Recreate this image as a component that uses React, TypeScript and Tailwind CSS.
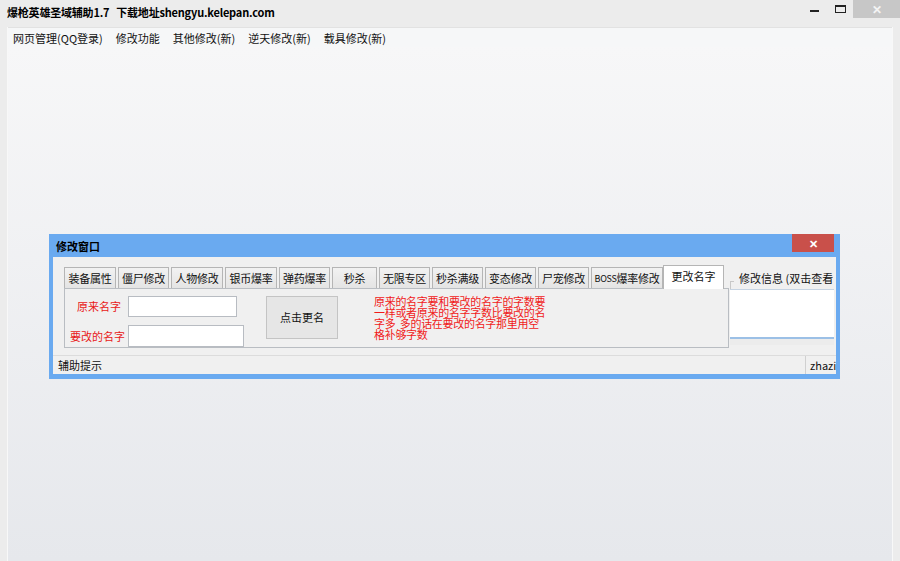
const tabs = [
  { name: '装备属性', w: 'w-[52px]' },
  { name: '僵尸修改', w: 'w-[51px]' },
  { name: '人物修改', w: 'w-[52px]' },
  { name: '银币爆率', w: 'w-[52px]' },
  { name: '弹药爆率', w: 'w-[51px]' },
  { name: '秒杀', w: 'w-[45px]' },
  { name: '无限专区', w: 'w-[51px]' },
  { name: '秒杀满级', w: 'w-[51px]' },
  { name: '变态修改', w: 'w-[51px]' },
  { name: '尸宠修改', w: 'w-[51px]' },
]

const menus = ['网页管理(QQ登录)', '修改功能', '其他修改(新)', '逆天修改(新)', '载具修改(新)']

const font = { fontFamily: '"Noto Sans CJK SC", "Liberation Sans", sans-serif' }

export default function App() {
  return (
    <div
      className="w-[900px] h-[561px] bg-[#ececec] flex flex-col text-[11px] text-[#111] overflow-hidden"
      style={font}
    >
      {/* Title bar */}
      <div className="h-[27px] flex items-start shrink-0">
        <div className="pl-[7px] pt-[5px] font-bold text-[11px] leading-[15px] tracking-[-0.2px] text-black">
          爆枪英雄圣域辅助1.7&nbsp;&nbsp;&nbsp;下载地址shengyu.kelepan.com
        </div>
        <div className="ml-auto flex items-start">
          <div className="w-[26px] h-[17px] flex items-center justify-center">
            <div className="w-[9px] h-[2px] bg-[#222] mt-[5px]" />
          </div>
          <div className="w-[26px] h-[17px] flex items-center justify-center">
            <div className="w-[11px] h-[8px] border border-[#222] border-t-2" />
          </div>
          <div className="w-[47px] h-[18px] bg-[#c7c7c7] flex items-center justify-center text-[#f4f4f4] text-[12px] leading-none font-bold">
            ✕
          </div>
        </div>
      </div>

      {/* Window frame */}
      <div className="flex-1 px-[7px] flex flex-col">
        <div className="flex-1 flex flex-col border-l border-r border-[#f8f8f8]">
          {/* Menu bar */}
          <div className="h-[20px] bg-[#f6f7f8] flex items-center pl-[5px] border-t border-[#e2e2e2]">
            {menus.map((m) => (
              <div key={m} className="mr-[13px] leading-[18px] text-[#111] whitespace-nowrap">
                {m}
              </div>
            ))}
          </div>

          {/* Client area */}
          <div className="flex-1 bg-gradient-to-b from-[#f7f7f8] to-[#e6e8ec] pt-[187px] pl-[41px]">
            {/* Dialog */}
            <div className="w-[791px] h-[145px] bg-[#6aaaf0] flex flex-col px-[4px] pb-[5px]">
              <div className="h-[23px] flex items-start shrink-0">
                <div className="pl-[3px] pt-[5px] font-bold text-[11px] leading-[15px] text-black">修改窗口</div>
                <div className="ml-auto mr-[2px] w-[42px] h-[18px] bg-[#c9504a] flex items-center justify-center text-white text-[11px] font-bold leading-none">
                  ✕
                </div>
              </div>

              <div className="flex-1 bg-[#f0f0f0] flex flex-col">
                <div className="flex pl-[11px] pt-[8px]">
                  {/* Tab control */}
                  <div className="w-[665px] flex flex-col">
                    <div className="h-[23px] flex items-end relative z-10">
                      {tabs.map((t) => (
                        <div
                          key={t.name}
                          className={`${t.w} h-[21px] mr-[2px] border border-b-0 border-[#b5b5b5] bg-gradient-to-b from-[#f2f2f2] to-[#e4e4e4] flex items-center justify-center leading-none whitespace-nowrap tracking-[-0.2px]`}
                        >
                          {t.name}
                        </div>
                      ))}
                      <div className="w-[72px] h-[21px] mr-[2px] border border-b-0 border-[#b5b5b5] bg-gradient-to-b from-[#f2f2f2] to-[#e4e4e4] flex items-center justify-center leading-none whitespace-nowrap">
                        <span className="text-[9px] tracking-[-0.3px]">BOSS</span>
                        <span className="tracking-[-0.3px]">爆率修改</span>
                      </div>
                      <div className="w-[61px] h-[24px] -ml-[2px] -mb-[1px] border border-b-0 border-[#b5b5b5] bg-white flex items-center justify-center leading-none pb-[3px]">
                        更改名字
                      </div>
                    </div>
                    <div className="h-[60px] border border-[#b9bdc2] bg-[#f0f0f0] flex items-start pt-[7px]">
                      <div className="flex flex-col gap-[8px]">
                        <div className="flex items-center h-[21px]">
                          <div className="w-[56px] text-right text-[#e81818]">原来名字</div>
                          <div className="ml-[7px] w-[109px] h-[21px] bg-white border border-[#b8bcc2]" />
                        </div>
                        <div className="flex items-center h-[22px]">
                          <div className="w-[60px] text-right text-[#e81818]">要改的名字</div>
                          <div className="ml-[3px] w-[116px] h-[22px] bg-white border border-[#b8bcc2]" />
                        </div>
                      </div>
                      <div className="ml-[22px] w-[72px] h-[43px] bg-[#e6e6e6] border border-[#c4c4c4] flex items-center justify-center">
                        点击更名
                      </div>
                      <div className="ml-[36px] w-[182px] text-[11px] leading-[11px] text-[#f01a1a] tracking-[-0.3px]">
                        原来的名字要和要改的名字的字数要
                        <br />
                        一样或者原来的名字字数比要改的名
                        <br />
                        字多&nbsp;&nbsp;多的话在要改的名字那里用空
                        <br />
                        格补够字数
                      </div>
                    </div>
                  </div>

                  {/* Info list */}
                  <div className="ml-[1px] w-[104px] flex flex-col">
                    <div className="h-[24px] flex items-end relative">
                      <div className="absolute left-0 bottom-0 w-[4px] h-[8px] border-l border-t border-[#c8c8c8]" />
                      <div className="pl-[9px] pb-[4px] whitespace-nowrap overflow-hidden leading-[14px]">
                        修改信息 (双击查看
                      </div>
                    </div>
                    <div className="h-[50px] bg-white border-t border-[#c6d4e3] border-b-2 border-b-[#9cc0e6]" />
                    <div className="h-[6px] bg-[#ececec]" />
                  </div>
                </div>

                {/* Status bar */}
                <div className="mt-auto h-[19px] border-t border-[#dcdcdc] flex items-center">
                  <div className="flex-1 pl-[5px] leading-none">辅助提示</div>
                  <div className="w-[31px] h-full border-l border-[#d0d0d0] pl-[4px] flex items-center overflow-hidden whitespace-nowrap leading-none">
                    zhazi
                  </div>
                </div>
              </div>
            </div>
          </div>
        </div>
      </div>
    </div>
  )
}
